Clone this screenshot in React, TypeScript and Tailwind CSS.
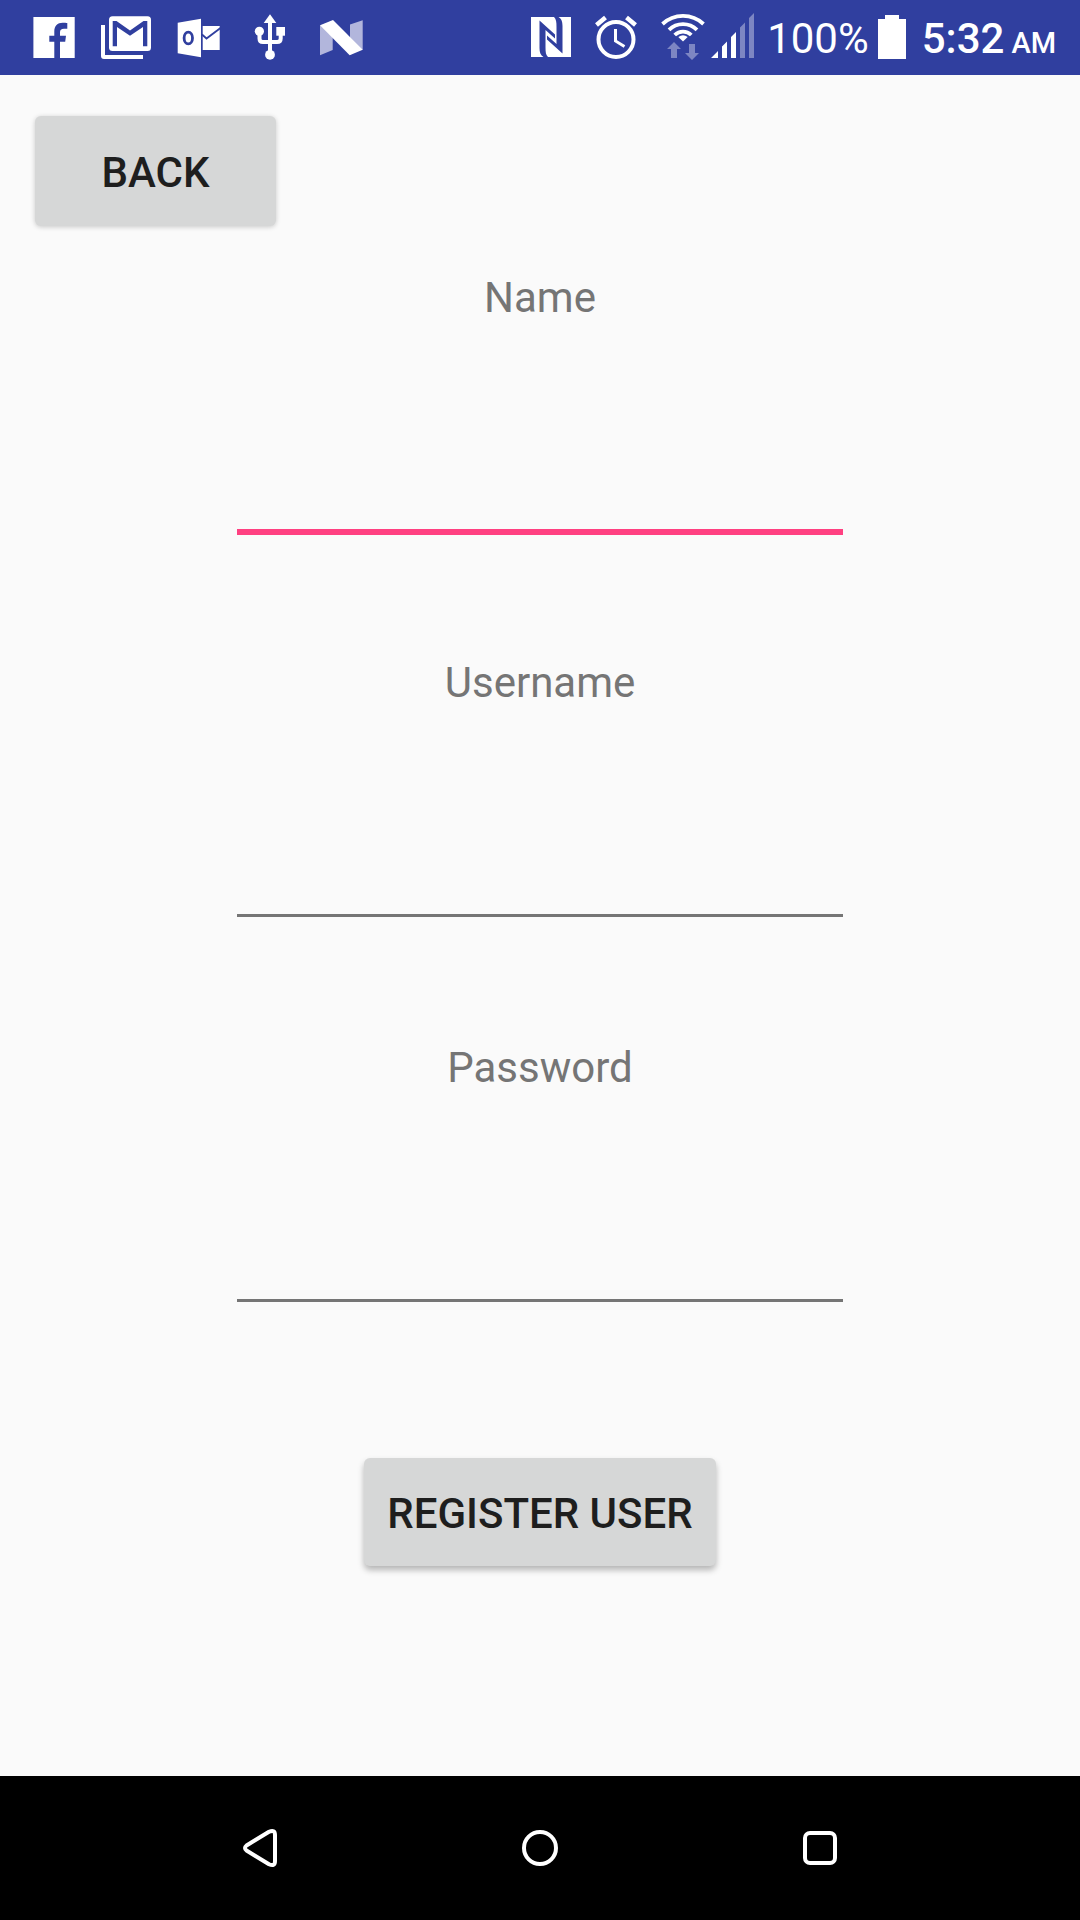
import type { ReactNode } from "react";

function Glyph({ w, children }: { w: number; children: ReactNode }) {
  return (
    <svg width={w} height={49} viewBox={`0 0 ${w} 49`} fill="#fff" aria-hidden="true" className="shrink-0 overflow-visible">
      {children}
    </svg>
  );
}

function FacebookIcon() {
  return (
    <Glyph w={42}>
      <path
        fillRule="evenodd"
        d="M.4 4H41.7V45H27V28.7H32.2L33 22.7H27V19.3C27 17 28 15.7 31 15.7H34.3V10C33.2 9.8 31.5 9.7 29.6 9.7C24.5 9.7 21.3 13 21.3 18.5V22.7H16.3V28.7H21.3V45H.4Z"
      />
    </Glyph>
  );
}

function GmailIcon() {
  return (
    <Glyph w={50}>
      <rect x="8" y="3.3" width="42" height="34.7" rx="3.5" />
      <path d="M0 12H4V42H42V46H3A3 3 0 0 1 0 43Z" />
      <path fill="#303f9f" d="M11.7 33.3V8H15.5L29 17.5L42.5 8H46.3V33.3H42V14L29 22.7L16 14V33.3Z" />
    </Glyph>
  );
}

function OutlookIcon() {
  return (
    <Glyph w={43}>
      <path d="M.7 9.7L24 5.7V44.3L.7 40.3Z" />
      <ellipse cx="11.3" cy="25" rx="4.2" ry="5.9" fill="none" stroke="#303f9f" strokeWidth="2.8" />
      <path d="M25.7 13H42.7V37H25.7Z" />
      <path d="M25 21.5L29.5 25.5L43.5 15" fill="none" stroke="#303f9f" strokeWidth="1.8" />
    </Glyph>
  );
}

function UsbIcon() {
  return (
    <Glyph w={30}>
      <path d="M15 1.3L21.3 10H8.7Z" />
      <path d="M15 8V41M4.5 18V25.5Q4.5 29 8 29H22Q25.7 29 25.7 25.5V18" fill="none" stroke="#fff" strokeWidth="4" />
      <circle cx="15" cy="41.8" r="4.9" />
      <circle cx="4.4" cy="18.3" r="4.6" />
      <rect x="21.3" y="14" width="8.7" height="8.7" />
    </Glyph>
  );
}

function NougatIcon() {
  return (
    <Glyph w={43}>
      <path fill="#b2b6dc" d="M0 12.3L12.7 18V37L0 42.3ZM30 11.5L42.7 7.3V37L30 30Z" />
      <path d="M0 12.3L13 7L42.7 36.7L29.7 42.3Z" />
    </Glyph>
  );
}

function NfcIcon() {
  return (
    <Glyph w={40}>
      <rect y="4" width="40" height="40" />
      <path
        fill="#303f9f"
        d="M8.5 7.5L24 21.5V25.5L14.5 17V34C14.5 39 14.8 42 17 44H12.5C9.5 42.5 8.500 39 8.500 35ZM31.5 40.500L16 26.500V22.500L25.500 31V14C25.500 9 25.200 6 23 4H27.500C30.500 5.500 31.500 9 31.500 13Z"
      />
    </Glyph>
  );
}

function AlarmIcon() {
  return (
    <Glyph w={42}>
      <g fill="none" stroke="#fff">
        <circle cx="21" cy="26.5" r="17.5" strokeWidth="4" />
        <path d="M20.500 16V28L29.500 33.500" strokeWidth="3" />
        <path d="M1.5 12L10.500 4.500M31.500 4.500L40.500 12" strokeWidth="4.500" />
      </g>
    </Glyph>
  );
}

function WifiIcon() {
  return (
    <Glyph w={44}>
      <g fill="none" stroke="#fff" strokeWidth="3.8">
        <path d="M1.5 11A30 30 0 0 1 42.5 11" />
        <path d="M8 16.8A20 20 0 0 1 36 16.8" />
        <path d="M13.700 22A12 12 0 0 1 30.300 22" />
      </g>
      <path d="M17.300 24Q22 20.500 26.700 24L22 28.500Z" />
      <path fill="#7d86c3" d="M13 29L20 36H16V45H10V36H6ZM28 31H34V40H38L31 47L24 40H28Z" />
    </Glyph>
  );
}

function SignalIcon() {
  return (
    <Glyph w={43}>
      <path d="M0 45L7 38V45ZM11 33.500L16 28.500V45H11ZM20 24L25 19V45H20Z" />
      <path fill="#7d86c3" d="M29 14.500L34 9.500V45H29ZM38 5L43 0V45H38Z" />
    </Glyph>
  );
}

function BatteryIcon() {
  return (
    <Glyph w={28}>
      <path d="M7 2H21V6H28V46H0V6H7Z" />
    </Glyph>
  );
}

function StatusBar() {
  return (
    <header className="flex h-[75px] shrink-0 items-center justify-between bg-[#303f9f] pr-6 pl-[33px] text-white">
      <div className="flex items-center gap-[26px]">
        <FacebookIcon />
        <GmailIcon />
        <OutlookIcon />
        <div className="px-[9px]">
          <UsbIcon />
        </div>
        <NougatIcon />
      </div>
      <div className="flex items-center">
        <div className="flex items-center gap-6">
          <NfcIcon />
          <AlarmIcon />
          <WifiIcon />
        </div>
        <div className="ml-[6px]">
          <SignalIcon />
        </div>
        <span className="ml-[13px] pt-[3px] text-[42px] leading-[50px]">100%</span>
        <div className="ml-[9px]">
          <BatteryIcon />
        </div>
        <time className="ml-4 flex items-baseline gap-[7px] pt-[3px] text-[42px] leading-[50px] font-medium">
          5:32 <span className="text-[29px] leading-none">AM</span>
        </time>
      </div>
    </header>
  );
}

function Field({ id, label, type = "text", focused = false }: { id: string; label: string; type?: string; focused?: boolean }) {
  return (
    <div className="flex h-[385px] w-full max-w-[606px] flex-col items-center">
      <label htmlFor={id} className="text-[42px] leading-[50px] text-[#757575]">
        {label}
      </label>
      <input
        id={id}
        name={id}
        type={type}
        className={
          focused
            ? "mt-[80px] h-[132px] w-full border-b-[6px] border-[#ff4081] bg-transparent text-[54px] text-[#212121] outline-none"
            : "mt-[80px] h-[129px] w-full border-b-[3px] border-[#757575] bg-transparent text-[54px] text-[#212121] outline-none"
        }
      />
    </div>
  );
}

function NavButton({ label, children }: { label: string; children: ReactNode }) {
  return (
    <button type="button" aria-label={label} className="flex h-full w-[280px] items-center justify-center">
      <svg width="40" height="40" viewBox="0 0 40 40" fill="none" stroke="#fff" strokeWidth="4" strokeLinejoin="round" aria-hidden="true">
        {children}
      </svg>
    </button>
  );
}

export default function App() {
  return (
    <div className="flex min-h-screen flex-col bg-[#fafafa] font-[Roboto,sans-serif]">
      <StatusBar />
      <main className="flex flex-1 flex-col items-center px-[35px] pt-[41px]">
        <button
          type="button"
          className="h-[110px] w-[241px] self-start rounded-[6px] bg-[#d6d7d7] pt-[3px] text-[42px] leading-[50px] font-medium text-[#1e1e1e] shadow-[0_1px_5px_rgba(0,0,0,0.2)]"
        >
          BACK
        </button>
        <form className="mt-[47px] flex w-full flex-col items-center">
          <Field id="name" label="Name" focused />
          <Field id="username" label="Username" />
          <Field id="password" label="Password" type="password" />
          <button
            type="button"
            className="mt-[30px] h-[108px] rounded-[6px] bg-[#d6d7d7] px-[23px] pt-[3px] text-[42px] leading-[50px] font-medium text-[#1e1e1e] shadow-[0_4px_6px_rgba(0,0,0,0.28)]"
          >
            REGISTER USER
          </button>
        </form>
      </main>
      <nav className="flex h-36 shrink-0 items-center justify-center bg-black">
        <NavButton label="Back">
          <path d="M6.500 17.500Q3.500 20 6.500 22.500L29 36.200Q35 39 35 33V7Q35 1 29 3.800Z" />
        </NavButton>
        <NavButton label="Home">
          <circle cx="20" cy="20" r="16" />
        </NavButton>
        <NavButton label="Recent apps">
          <rect x="5" y="5" width="30" height="30" rx="5" />
        </NavButton>
      </nav>
    </div>
  );
}
